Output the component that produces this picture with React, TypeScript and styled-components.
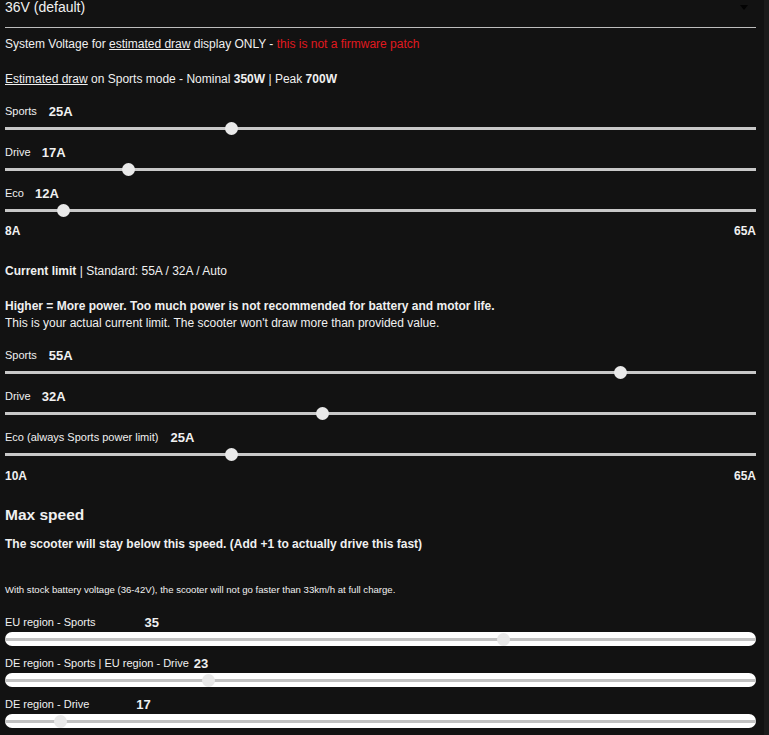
import React from "react";
import styled, { createGlobalStyle, css } from "styled-components";

const GlobalStyle = createGlobalStyle`
  html, body {
    margin: 0;
    padding: 0;
    background: #121212;
  }
  body {
    font-family: "Liberation Sans", Arial, sans-serif;
    color: #f0f0f0;
  }
  * { box-sizing: border-box; }
`;

const Page = styled.div`
  display: flex;
  flex-direction: column;
  min-height: 735px;
  padding: 0 8px 0 5px;
  border-right: 5px solid #1b1b1b;
`;

const SelectBox = styled.div`
  position: relative;
  height: 28px;
  border-bottom: 1px solid #bdbdbd;
  font-size: 14px;
  line-height: 14px;
  color: #f0f0f0;
`;

const SelectArrow = styled.span`
  position: absolute;
  right: 8px;
  top: 5px;
  width: 0;
  height: 0;
  border-left: 4px solid transparent;
  border-right: 4px solid transparent;
  border-top: 5px solid #030303;
`;

const Line = styled.div<{ $top: number; $size?: number; $lh?: number; $bold?: boolean }>`
  margin-top: ${(p) => p.$top}px;
  font-size: ${(p) => p.$size ?? 12}px;
  line-height: ${(p) => p.$lh ?? 14}px;
  font-weight: ${(p) => (p.$bold ? 700 : 400)};
  white-space: nowrap;
`;

const Underlined = styled.span`
  text-decoration: underline;
`;

const Warn = styled.span`
  color: #e0191f;
`;

const Strong = styled.b`
  font-weight: 700;
`;

const Group = styled.div<{ $top: number }>`
  margin-top: ${(p) => p.$top}px;
  display: flex;
  flex-direction: column;
  gap: 9px;
`;

const Row = styled.div`
  display: flex;
  flex-direction: column;
`;

const RowHead = styled.div`
  display: flex;
  align-items: center;
  height: 16px;
  white-space: nowrap;
`;

const RowLabel = styled.span`
  font-size: 11px;
`;

const RowValue = styled.span<{ $gap: number }>`
  margin-left: ${(p) => p.$gap}px;
  font-size: 13px;
  font-weight: 700;
`;

const thumb = css`
  -webkit-appearance: none;
  appearance: none;
  width: 13px;
  height: 13px;
  border-radius: 50%;
  border: none;
  margin-top: -5px;
`;

const Range = styled.input.attrs({ type: "range" })<{ $pill?: boolean }>`
  -webkit-appearance: none;
  appearance: none;
  display: block;
  width: 100%;
  margin: ${(p) => (p.$pill ? "2px 0 0" : "3px 0 0")};
  height: ${(p) => (p.$pill ? 14 : 13)}px;
  background: ${(p) => (p.$pill ? "#ffffff" : "transparent")};
  border-radius: ${(p) => (p.$pill ? "7px" : "0")};
  outline: none;

  &::-webkit-slider-runnable-track {
    height: 3px;
    background: ${(p) => (p.$pill ? "#c2c2c2" : "#c8c8c8")};
    border: none;
  }
  &::-webkit-slider-thumb {
    ${thumb};
    background: ${(p) => (p.$pill ? "#e8e8e8" : "#e9e9e9")};
  }
`;

const Scale = styled.div<{ $top: number }>`
  margin-top: ${(p) => p.$top}px;
  display: flex;
  justify-content: space-between;
  font-size: 12px;
  line-height: 14px;
  font-weight: 700;
`;

type SliderDef = {
  label: string;
  value: number;
  unit: string;
  min: number;
  max: number;
  gap: number;
};

const drawRows: SliderDef[] = [
  { label: "Sports", value: 25, unit: "A", min: 8, max: 65, gap: 12 },
  { label: "Drive", value: 17, unit: "A", min: 8, max: 65, gap: 11 },
  { label: "Eco", value: 12, unit: "A", min: 8, max: 65, gap: 11 },
];

const limitRows: SliderDef[] = [
  { label: "Sports", value: 55, unit: "A", min: 8, max: 65, gap: 12 },
  { label: "Drive", value: 32, unit: "A", min: 8, max: 65, gap: 11 },
  { label: "Eco (always Sports power limit)", value: 25, unit: "A", min: 8, max: 65, gap: 12 },
];

const speedRows: SliderDef[] = [
  { label: "EU region - Sports", value: 35, unit: "", min: 15, max: 45, gap: 49 },
  { label: "DE region - Sports | EU region - Drive", value: 23, unit: "", min: 15, max: 45, gap: 5 },
  { label: "DE region - Drive", value: 17, unit: "", min: 15, max: 45, gap: 47 },
];

function SliderRow({ def, pill }: { def: SliderDef; pill?: boolean }) {
  return (
    <Row>
      <RowHead>
        <RowLabel>{def.label}</RowLabel>
        <RowValue $gap={def.gap}>
          {def.value}
          {def.unit}
        </RowValue>
      </RowHead>
      <Range
        $pill={pill}
        min={def.min}
        max={def.max}
        defaultValue={def.value}
      />
    </Row>
  );
}

export default function App() {
  return (
    <>
      <GlobalStyle />
      <Page>
        <SelectBox>
          36V (default)
          <SelectArrow />
        </SelectBox>

        <Line $top={9}>
          System Voltage for <Underlined>estimated draw</Underlined> display ONLY -{" "}
          <Warn>this is not a firmware patch</Warn>
        </Line>

        <Line $top={21}>
          <Underlined>Estimated draw</Underlined> on Sports mode - Nominal <Strong>350W</Strong> | Peak{" "}
          <Strong>700W</Strong>
        </Line>

        <Group $top={17}>
          {drawRows.map((d) => (
            <SliderRow key={d.label} def={d} />
          ))}
        </Group>
        <Scale $top={7}>
          <span>8A</span>
          <span>65A</span>
        </Scale>

        <Line $top={26}>
          <Strong>Current limit</Strong> | Standard: 55A / 32A / Auto
        </Line>

        <Line $top={20} $lh={17}>
          <Strong>Higher = More power. Too much power is not recommended for battery and motor life.</Strong>
          <br />
          This is your actual current limit. The scooter won't draw more than provided value.
        </Line>

        <Group $top={15}>
          {limitRows.map((d) => (
            <SliderRow key={d.label} def={d} />
          ))}
        </Group>
        <Scale $top={8}>
          <span>10A</span>
          <span>65A</span>
        </Scale>

        <Line $top={23} $size={15.5} $lh={18} $bold>
          Max speed
        </Line>
        <Line $top={13} $bold>
          The scooter will stay below this speed. (Add +1 to actually drive this fast)
        </Line>
        <Line $top={33} $size={9.6} $lh={12}>
          With stock battery voltage (36-42V), the scooter will not go faster than 33km/h at full charge.
        </Line>

        <Group $top={18}>
          {speedRows.map((d) => (
            <SliderRow key={d.label} def={d} pill />
          ))}
        </Group>
      </Page>
    </>
  );
}
